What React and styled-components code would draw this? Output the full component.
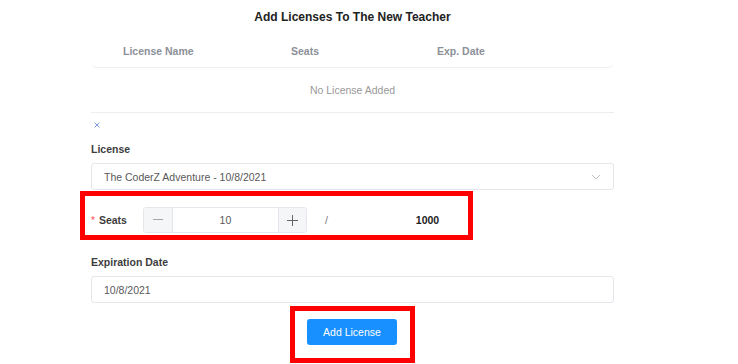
import styled, { createGlobalStyle } from "styled-components";

const Global = createGlobalStyle`
  body {
    margin: 0;
    background: #fff;
    font-family: "Liberation Sans", Arial, sans-serif;
  }
`

const Page = styled.div`
  width: 523px;
  padding: 9px 0 0 91px;
`
const Title = styled.h3`
  margin: 0;
  font-size: 12px;
  line-height: 16px;
  font-weight: bold;
  color: #222;
  text-align: center;
`
const Table = styled.div`
  margin-top: 10px;
`
const HeadRow = styled.div`
  display: grid;
  grid-template-columns: 168px 146px auto;
  align-items: center;
  height: 32px;
  padding-left: 32px;
  border-bottom: 1px solid #eceef2;
  border-radius: 0 0 6px 6px;
  font-size: 10.5px;
  font-weight: bold;
  color: #8c9099;
`
const EmptyRow = styled.div`
  height: 44px;
  line-height: 44px;
  text-align: center;
  border-bottom: 1px solid #eceef2;
  font-size: 10.5px;
  color: #999;
`
const Close = styled.div`
  height: 8px;
  margin: 8px 0 0 3px;
  display: flex;
  align-items: center;
`
const Label = styled.div`
  font-size: 10.5px;
  line-height: 14px;
  font-weight: bold;
  color: #3d3d3d;
  margin-top: ${(p) => p.$top}px;
`
const Field = styled.div`
  box-sizing: border-box;
  height: 27px;
  margin-top: 7px;
  padding: 0 12px;
  display: flex;
  align-items: center;
  justify-content: space-between;
  border: 1px solid #e4e6eb;
  border-radius: 3px;
  font-size: 10.5px;
  color: #595959;
`
const Mark = styled.div`
  border: 5px solid #ff0000;
  margin-top: ${(p) => p.$top}px;
`
const SeatsMark = styled(Mark)`
  width: 377px;
  margin-left: -11px;
  padding: 11px 0 2px 6px;
`
const ButtonMark = styled(Mark)`
  align-self: center;
  padding: 8px 13px 13px 12px;
`
const Row = styled.div`
  display: flex;
  align-items: center;
  font-size: 10.5px;
`
const Required = styled.span`
  color: #ff4d4f;
  margin-right: 4px;
  font-size: 10px;
`
const SeatsLabel = styled.span`
  font-weight: bold;
  color: #3d3d3d;
  width: 44px;
`
const Stepper = styled.div`
  display: flex;
  height: 26px;
  width: 164px;
  box-sizing: border-box;
  border: 1px solid #e4e6eb;
  border-radius: 3px;
  overflow: hidden;
`
const StepBtn = styled.div`
  width: ${(p) => p.$w}px;
  background: #f5f6f8;
  display: flex;
  align-items: center;
  justify-content: center;
  border-left: ${(p) => (p.$plus ? "1px solid #e4e6eb" : "none")};
  border-right: ${(p) => (p.$plus ? "none" : "1px solid #e4e6eb")};
`
const Value = styled.div`
  flex: 1;
  display: flex;
  align-items: center;
  justify-content: center;
  color: #595959;
`
const Slash = styled.span`
  color: #777;
  margin-left: 18px;
`
const Max = styled.span`
  font-weight: bold;
  color: #222;
  margin-left: 88px;
`
const Form = styled.div`
  display: flex;
  flex-direction: column;
`
const Button = styled.button`
  width: 90px;
  height: 26px;
  border: none;
  border-radius: 3px;
  background: #1890ff;
  color: #fff;
  font-family: inherit;
  font-size: 10.5px;
  padding: 0;
`

function App() {
  return (
    <Page>
      <Global />
      <Title>Add Licenses To The New Teacher</Title>
      <Table>
        <HeadRow>
          <span>License Name</span>
          <span>Seats</span>
          <span>Exp. Date</span>
        </HeadRow>
        <EmptyRow>No License Added</EmptyRow>
      </Table>
      <Form>
        <Close>
          <svg width="6" height="6" viewBox="0 0 6 6">
            <path d="M0.5 0.5 L5.5 5.5 M5.5 0.5 L0.5 5.5" stroke="#7f9be0" strokeWidth="1" />
          </svg>
        </Close>
        <Label $top={13}>License</Label>
        <Field>
          <span>The CoderZ Adventure - 10/8/2021</span>
          <svg width="10" height="6" viewBox="0 0 10 6">
            <path d="M1 1 L5 5 L9 1" fill="none" stroke="#bfbfbf" strokeWidth="1" />
          </svg>
        </Field>
        <SeatsMark $top={1}>
          <Row>
            <Required>*</Required>
            <SeatsLabel>Seats</SeatsLabel>
            <Stepper>
              <StepBtn $w={28}>
                <svg width="10" height="2" viewBox="0 0 10 2">
                  <rect width="10" height="1" fill="#a6a6a6" />
                </svg>
              </StepBtn>
              <Value>10</Value>
              <StepBtn $w={27} $plus>
                <svg width="11" height="11" viewBox="0 0 11 11">
                  <path d="M5.5 0 V11 M0 5.5 H11" stroke="#666" strokeWidth="1" />
                </svg>
              </StepBtn>
            </Stepper>
            <Slash>/</Slash>
            <Max>1000</Max>
          </Row>
        </SeatsMark>
        <Label $top={15}>Expiration Date</Label>
        <Field>
          <span>10/8/2021</span>
        </Field>
        <ButtonMark $top={3}>
          <Button>Add License</Button>
        </ButtonMark>
      </Form>
    </Page>
  );
}

export default App;
